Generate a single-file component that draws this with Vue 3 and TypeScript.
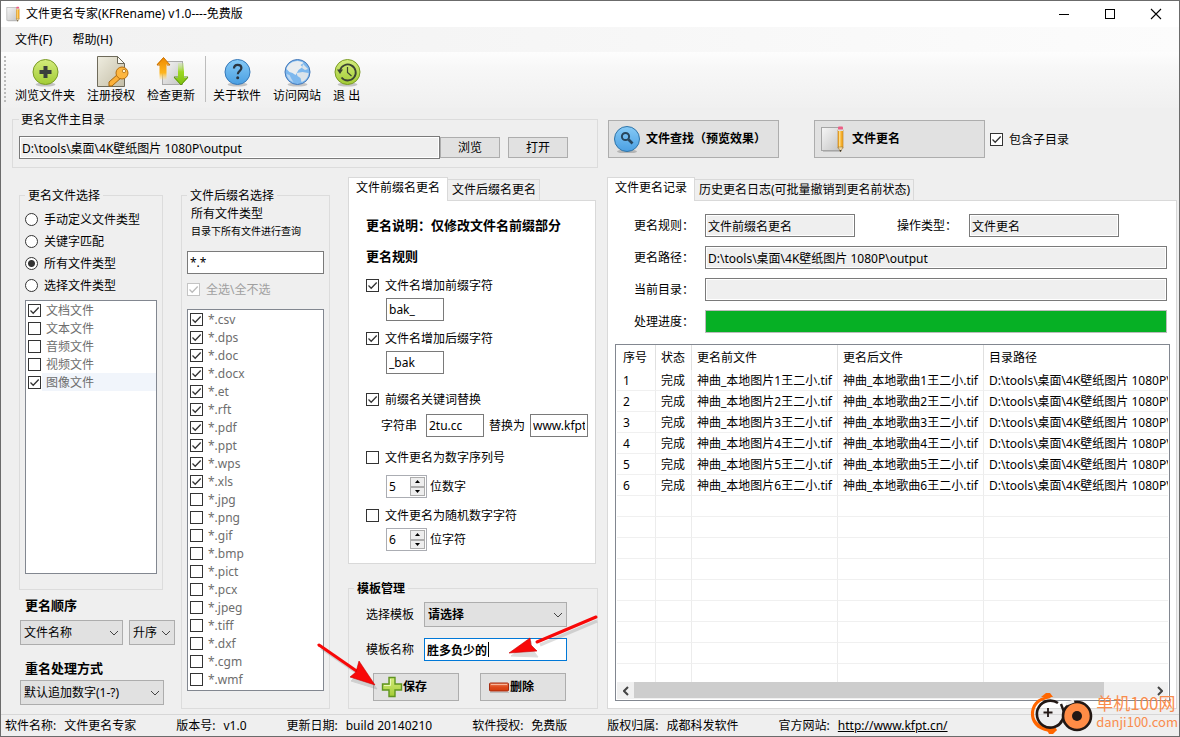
<script setup lang="ts">
import { ref } from 'vue'

interface CheckItem {
  label: string
  checked: boolean
}

const dir = 'D:\\tools\\桌面\\4K壁纸图片 1080P\\output'

const tools: { icon: string; label: string }[] = [
  { icon: 'plus', label: '浏览文件夹' },
  { icon: 'key', label: '注册授权' },
  { icon: 'update', label: '检查更新' },
  { icon: 'help', label: '关于软件' },
  { icon: 'globe', label: '访问网站' },
  { icon: 'exit', label: '退 出' },
]

const modes = ['手动定义文件类型', '关键字匹配', '所有文件类型', '选择文件类型']
const mode = ref('所有文件类型')

const kinds = ref<CheckItem[]>([
  { label: '文档文件', checked: true },
  { label: '文本文件', checked: false },
  { label: '音频文件', checked: false },
  { label: '视频文件', checked: false },
  { label: '图像文件', checked: true },
])

const extNames = 'csv dps doc docx et rft pdf ppt wps xls jpg png gif bmp pict pcx jpeg tiff dxf cgm wmf'.split(' ')
const exts = ref<CheckItem[]>(extNames.map((e, i) => ({ label: '*.' + e, checked: i < 10 })))

const mask = ref('*.*')
const path = ref(dir)
const prefixOn = ref(true)
const suffixOn = ref(true)
const replaceOn = ref(true)
const serialOn = ref(false)
const randomOn = ref(false)
const prefix = ref('bak_')
const suffix = ref('_bak')
const findText = ref('2tu.cc')
const replaceText = ref('www.kfpt.cn')
const serialLen = ref(5)
const randomLen = ref(6)
const templateName = ref('胜多负少的')
const subDirs = ref(true)

const rows = [1, 2, 3, 4, 5, 6].map((n) => ({
  n,
  state: '完成',
  before: `神曲_本地图片${n}王二小.tif`,
  after: `神曲_本地歌曲${n}王二小.tif`,
  path: dir,
}))

const status: { k: string; v: string; href?: string }[] = [
  { k: '软件名称:', v: '文件更名专家' },
  { k: '版本号:', v: 'v1.0' },
  { k: '更新日期:', v: 'build 20140210' },
  { k: '软件授权:', v: '免费版' },
  { k: '版权归属:', v: '成都科发软件' },
  { k: '官方网站:', v: 'http://www.kfpt.cn/', href: 'http://www.kfpt.cn/' },
]
</script>

<template>
  <div class="window">
    <svg class="defs" width="0" height="0" aria-hidden="true">
      <defs>
        <linearGradient id="gGreen" x1="0" y1="0" x2="0" y2="1">
          <stop offset="0" stop-color="#d3ec7c" /><stop offset="1" stop-color="#a3cc35" />
        </linearGradient>
        <linearGradient id="gBlue" x1="0" y1="0" x2="0" y2="1">
          <stop offset="0" stop-color="#86caf6" /><stop offset="1" stop-color="#4a9fe2" />
        </linearGradient>
        <linearGradient id="gPaper" x1="0" y1="0" x2="1" y2="1">
          <stop offset="0" stop-color="#efede0" /><stop offset="1" stop-color="#c3bda6" />
        </linearGradient>
        <linearGradient id="gGrey" x1="0" y1="0" x2="1" y2="1">
          <stop offset="0" stop-color="#f6f6f6" /><stop offset="1" stop-color="#c4c4c4" />
        </linearGradient>
        <linearGradient id="gUp" x1="0" y1="0" x2="0" y2="1">
          <stop offset="0" stop-color="#ef8a00" /><stop offset="0.7" stop-color="#fdb51e" /><stop offset="1" stop-color="#fdd56a" stop-opacity="0.2" />
        </linearGradient>
        <linearGradient id="gDown" x1="0" y1="0" x2="0" y2="1">
          <stop offset="0" stop-color="#c6e88a" stop-opacity="0.3" /><stop offset="0.4" stop-color="#9bd820" /><stop offset="1" stop-color="#7fbf10" />
        </linearGradient>
        <linearGradient id="gMinus" x1="0" y1="0" x2="0" y2="1">
          <stop offset="0" stop-color="#f08a62" /><stop offset="0.5" stop-color="#dd4a1c" /><stop offset="1" stop-color="#d43b0c" />
        </linearGradient>
        <symbol id="notepad" viewBox="0 0 28 28">
          <rect x="3" y="25" width="18" height="2" fill="#000" opacity="0.15" />
          <rect x="1.500" y="2.500" width="19" height="23" fill="url(#gGrey)" stroke="#a5a5a5" />
          <rect x="18" y="5" width="5" height="18" fill="#f5ae2b" stroke="#b97613" stroke-width="0.6" />
          <rect x="19" y="5" width="1.500" height="18" fill="#ffdb83" />
          <rect x="18" y="1.500" width="5" height="3.500" rx="1" fill="#ec5f86" />
          <rect x="18" y="4.500" width="5" height="1.500" fill="#ddd" />
          <path d="M18 22h5l-2.500 5z" fill="#f1dba8" stroke="#8c6a2a" stroke-width="0.5" />
          <path d="M19.500 25h2l-1 2z" fill="#333" />
        </symbol>
      </defs>
    </svg>

    <header class="titlebar">
      <svg class="app-icon" width="16" height="16"><use href="#notepad" /></svg>
      <h1>文件更名专家(KFRename) v1.0----免费版</h1>
      <button type="button" class="win" aria-label="最小化">
        <svg width="12" height="12"><path d="M1 6.500h10" stroke="#000" /></svg>
      </button>
      <button type="button" class="win" aria-label="最大化">
        <svg width="12" height="12"><rect x="1.500" y="1.500" width="9" height="9" fill="none" stroke="#000" /></svg>
      </button>
      <button type="button" class="win" aria-label="关闭">
        <svg width="12" height="12"><path d="M1 1l10 10M11 1L1 11" stroke="#000" stroke-width="1.100" /></svg>
      </button>
    </header>

    <nav class="menu">
      <button type="button">文件(F)</button>
      <button type="button">帮助(H)</button>
    </nav>

    <div class="toolbar">
      <span class="grip"></span>
      <template v-for="t in tools" :key="t.icon">
        <span v-if="t.icon === 'help'" class="tsep"></span>
        <button type="button" class="tool">
          <svg width="36" height="32" viewBox="0 0 36 32">
            <g v-if="t.icon === 'plus'">
              <ellipse cx="18.500" cy="28.500" rx="10" ry="2" fill="#000" opacity="0.2" />
              <circle cx="18.500" cy="16" r="12.500" fill="url(#gGreen)" stroke="#7a9a25" />
              <path d="M16.500 10h4v4h4v4h-4v4h-4v-4h-4v-4h4z" fill="#3a3f3c" />
            </g>
            <g v-else-if="t.icon === 'key'">
              <path d="M4.500 .5h20l7 7v23h-27z" fill="url(#gPaper)" stroke="#6e6a5a" />
              <path d="M24.500 .5l7 7h-7z" fill="#fbfaf4" stroke="#6e6a5a" />
              <path d="M25 18l4 3-10 9h-3v-4z" fill="#fbb03a" stroke="#a7660b" />
              <circle cx="29" cy="17" r="6" fill="#fdb640" stroke="#b56f10" />
              <circle cx="31" cy="15" r="1.700" fill="#fff3d0" stroke="#a7660b" stroke-width="0.7" />
            </g>
            <g v-else-if="t.icon === 'update'">
              <rect x="9.500" y="5.500" width="20" height="23" fill="url(#gGrey)" stroke="#aaa" />
              <path d="M10.500 1.500l6 7h-3v15h-7v-15h-3z" fill="url(#gUp)" />
              <path d="M7 9H4l6.500-7.500L17 9h-3" fill="none" stroke="#c96f00" />
              <path d="M25 7h6v15h4l-7 7-7-7h4z" fill="url(#gDown)" />
              <path d="M25 21h-4l7 8 7-8h-4" fill="none" stroke="#5d9410" />
            </g>
            <g v-else-if="t.icon === 'help'">
              <ellipse cx="18.500" cy="28.500" rx="10" ry="2" fill="#000" opacity="0.2" />
              <circle cx="18.500" cy="16" r="12.500" fill="url(#gBlue)" stroke="#3477b8" />
              <path d="M15 12.500c0-2.500 1.500-3.700 3.700-3.700s3.700 1.200 3.700 3.300c0 2.700-3.600 2.900-3.600 6.200" fill="none" stroke="#2b3540" stroke-width="2.200" />
              <circle cx="18.700" cy="21.800" r="1.500" fill="#2b3540" />
            </g>
            <g v-else-if="t.icon === 'globe'">
              <ellipse cx="18.500" cy="28.500" rx="10" ry="2" fill="#000" opacity="0.2" />
              <circle cx="18.500" cy="16" r="12.500" fill="#7db8ee" stroke="#4377b8" />
              <path d="M7.500 13c1-4 5-8 11-8 3 0 5 1 6 2l-3 2 2 2-4 3-3 5-3-2-3-1z" fill="#e9edf0" />
              <path d="M17.500 17l6-1 6 1c0 4-3 8-7 9l-1-4-3-2zM24 8l5 5-3 1-3-2z" fill="#dce4ea" />
              <path d="M7.500 18l3 1 2 4 2 3c-4-1-6-4-7-8z" fill="#b9d6f2" />
            </g>
            <g v-else>
              <ellipse cx="18.500" cy="28.500" rx="10" ry="2" fill="#000" opacity="0.2" />
              <circle cx="18.500" cy="16" r="12.500" fill="url(#gGreen)" stroke="#7a9a25" />
              <path d="M11 14.500a8 8 0 1 1 1.500 7" fill="none" stroke="#3c4434" stroke-width="1.800" />
              <path d="M8 13.500h6l-3 4.500z" fill="#3c4434" />
              <path d="M18.500 11v5.500l4 3.500" fill="none" stroke="#3c4434" stroke-width="1.200" />
            </g>
          </svg>
          <span>{{ t.label }}</span>
        </button>
      </template>
    </div>

    <main class="main">
      <section class="left">
        <fieldset class="dir">
          <legend>更名文件主目录</legend>
          <div class="dir-row">
            <input v-model="path" class="txt ro" type="text" aria-label="更名文件主目录" readonly />
            <button type="button" class="btn">浏览</button>
            <button type="button" class="btn open">打开</button>
          </div>
        </fieldset>

        <div class="cols">
          <div class="col-a">
            <fieldset class="pick">
              <legend>更名文件选择</legend>
              <label v-for="m in modes" :key="m" class="radio">
                <input v-model="mode" type="radio" name="mode" :value="m" /><span>{{ m }}</span>
              </label>
              <div class="list kinds">
                <label v-for="k in kinds" :key="k.label" class="item">
                  <input v-model="k.checked" type="checkbox" /><span>{{ k.label }}</span>
                </label>
              </div>
            </fieldset>
            <label class="head" for="order">更名顺序</label>
            <div class="sel-row">
              <span class="sel by">
                <select id="order"><option>文件名称</option></select>
                <svg width="10" height="6"><path d="M1 1l4 4 4-4" fill="none" stroke="#444" /></svg>
              </span>
              <span class="sel asc">
                <select aria-label="升序或降序"><option>升序</option><option>降序</option></select>
                <svg width="10" height="6"><path d="M1 1l4 4 4-4" fill="none" stroke="#444" /></svg>
              </span>
            </div>
            <label class="head dup" for="dup">重名处理方式</label>
            <span class="sel dupsel">
              <select id="dup"><option>默认追加数字(1-?)</option></select>
              <svg width="10" height="6"><path d="M1 1l4 4 4-4" fill="none" stroke="#444" /></svg>
            </span>
          </div>

          <fieldset class="col-b">
            <legend>文件后缀名选择</legend>
            <p class="kind">所有文件类型</p>
            <p class="hint">目录下所有文件进行查询</p>
            <input v-model="mask" class="txt" type="text" aria-label="文件后缀名" />
            <label class="all"><input type="checkbox" checked disabled /><span>全选\全不选</span></label>
            <div class="list exts">
              <label v-for="e in exts" :key="e.label" class="item">
                <input v-model="e.checked" type="checkbox" /><span>{{ e.label }}</span>
              </label>
            </div>
          </fieldset>

          <div class="col-c">
            <div class="tabs" role="tablist">
              <button type="button" role="tab" class="tab on" aria-selected="true">文件前缀名更名</button>
              <button type="button" role="tab" class="tab" aria-selected="false">文件后缀名更名</button>
            </div>
            <div class="rules">
              <p class="strong">更名说明：仅修改文件名前缀部分</p>
              <p class="strong second">更名规则</p>
              <label class="check"><input v-model="prefixOn" type="checkbox" /><span>文件名增加前缀字符</span></label>
              <input v-model="prefix" class="txt small" type="text" aria-label="前缀字符" />
              <label class="check"><input v-model="suffixOn" type="checkbox" /><span>文件名增加后缀字符</span></label>
              <input v-model="suffix" class="txt small" type="text" aria-label="后缀字符" />
              <label class="check r3"><input v-model="replaceOn" type="checkbox" /><span>前缀名关键词替换</span></label>
              <div class="replace">
                <label for="find">字符串</label>
                <input id="find" v-model="findText" class="txt" type="text" />
                <label for="repl">替换为</label>
                <input id="repl" v-model="replaceText" class="txt" type="text" />
              </div>
              <label class="check"><input v-model="serialOn" type="checkbox" /><span>文件更名为数字序列号</span></label>
              <div class="spin-row wide">
                <span class="spin">
                  <input id="serial" v-model="serialLen" type="number" />
                  <span class="arrows">
                    <button type="button" aria-label="增加" @click="serialLen++"><svg width="5" height="3"><path d="M0 3L2.500 0 5 3z" /></svg></button>
                    <button type="button" aria-label="减少" @click="serialLen--"><svg width="5" height="3"><path d="M0 0l2.500 3L5 0z" /></svg></button>
                  </span>
                </span>
                <label for="serial">位数字</label>
              </div>
              <label class="check"><input v-model="randomOn" type="checkbox" /><span>文件更名为随机数字字符</span></label>
              <div class="spin-row">
                <span class="spin">
                  <input id="random" v-model="randomLen" type="number" />
                  <span class="arrows">
                    <button type="button" aria-label="增加" @click="randomLen++"><svg width="5" height="3"><path d="M0 3L2.500 0 5 3z" /></svg></button>
                    <button type="button" aria-label="减少" @click="randomLen--"><svg width="5" height="3"><path d="M0 0l2.500 3L5 0z" /></svg></button>
                  </span>
                </span>
                <label for="random">位字符</label>
              </div>
            </div>

            <fieldset class="tpl">
              <legend>模板管理</legend>
              <div class="tpl-row">
                <label for="tpl">选择模板</label>
                <span class="sel bold">
                  <select id="tpl"><option>请选择</option></select>
                  <svg width="10" height="6"><path d="M1 1l4 4 4-4" fill="none" stroke="#444" /></svg>
                </span>
              </div>
              <div class="tpl-row name">
                <label for="tname">模板名称</label>
                <span class="focus">
                  <input id="tname" v-model="templateName" class="txt" type="text" />
                  <i class="caret"></i>
                </span>
              </div>
              <div class="tpl-btns">
                <button type="button" class="btn">
                  <svg width="22" height="22" viewBox="0 0 22 22">
                    <path d="M8 1.500h6v6.500h6.500v6h-6.500v6.500h-6v-6.500h-6.500v-6h6.500z" fill="url(#gGreen)" stroke="#5f9420" stroke-width="1.400" />
                    <path d="M9.500 3v6.500H3" fill="none" stroke="#ecf8b8" />
                  </svg>保存
                </button>
                <button type="button" class="btn">
                  <svg width="22" height="22" viewBox="0 0 22 22">
                    <rect x="1.500" y="7" width="19" height="8" rx="1" fill="url(#gMinus)" stroke="#a52c12" />
                    <path d="M3 8.500h16" stroke="#f7b59a" />
                    <path d="M2 16.500h19" stroke="#000" opacity="0.15" />
                  </svg>删除
                </button>
              </div>
              <svg class="pointers" width="300" height="90" viewBox="0 0 300 90" aria-hidden="true">
                <g transform="translate(2 3)" fill="#555" stroke="#555" opacity="0.2">
                  <path d="M11 35L46 59" stroke-width="3" />
                  <path d="M67 76l-26-8 6-6 3-9z" />
                  <path d="M287 8L230 32" stroke-width="3" />
                  <path d="M201 43l20-15 1 8 6 8z" />
                </g>
                <g fill="#f80808" stroke="#c80000">
                  <path d="M11 35L50 62" stroke="#f80808" stroke-width="3" stroke-linecap="round" />
                  <path d="M67 75l-25-8 6-5 3-11z" stroke-width="0.600" />
                  <path d="M288 7L229 32" stroke="#f80808" stroke-width="3" stroke-linecap="round" />
                  <path d="M201 43l21-15 1 7 6 6z" stroke-width="0.600" />
                </g>
              </svg>
            </fieldset>
          </div>
        </div>
      </section>

      <section class="right">
        <div class="actions">
          <button type="button" class="btn big">
            <svg width="28" height="28" viewBox="0 0 28 28">
              <ellipse cx="13" cy="26.500" rx="10" ry="2" fill="#000" opacity="0.2" />
              <circle cx="13" cy="14" r="12.500" fill="url(#gBlue)" stroke="#2f74a8" />
              <circle cx="11.500" cy="11.500" r="3.600" fill="none" stroke="#27455c" stroke-width="2" />
              <path d="M14.500 14.500l4 4" stroke="#27455c" stroke-width="2.600" />
            </svg>文件查找（预览效果）
          </button>
          <button type="button" class="btn big">
            <svg width="28" height="28"><use href="#notepad" /></svg>文件更名
          </button>
          <label class="check"><input v-model="subDirs" type="checkbox" /><span>包含子目录</span></label>
        </div>

        <div class="tabs" role="tablist">
          <button type="button" role="tab" class="tab on" aria-selected="true">文件更名记录</button>
          <button type="button" role="tab" class="tab" aria-selected="false">历史更名日志(可批量撤销到更名前状态)</button>
        </div>
        <div class="log">
          <div class="fields">
            <div class="frow">
              <label for="rule">更名规则：</label>
              <input id="rule" class="txt ro short" type="text" value="文件前缀名更名" readonly />
              <label for="op" class="op">操作类型：</label>
              <input id="op" class="txt ro short" type="text" value="文件更名" readonly />
            </div>
            <div class="frow">
              <label for="rpath">更名路径：</label>
              <input id="rpath" class="txt ro" type="text" :value="dir" readonly />
            </div>
            <div class="frow">
              <label for="cur">当前目录：</label>
              <input id="cur" class="txt ro" type="text" value="" readonly />
            </div>
            <div class="frow">
              <label for="prog">处理进度：</label>
              <progress id="prog" value="100" max="100"></progress>
            </div>
          </div>

          <div class="grid">
            <div class="grid-body">
              <table>
                <colgroup><col class="c1" /><col class="c2" /><col class="c3" /><col class="c3" /><col /></colgroup>
                <thead>
                  <tr><th>序号</th><th>状态</th><th>更名前文件</th><th>更名后文件</th><th>目录路径</th></tr>
                </thead>
                <tbody>
                  <tr v-for="r in rows" :key="r.n">
                    <td>{{ r.n }}</td><td>{{ r.state }}</td><td>{{ r.before }}</td><td>{{ r.after }}</td><td>{{ r.path }}</td>
                  </tr>
                  <tr v-for="i in 9" :key="'e' + i"><td></td><td></td><td></td><td></td><td></td></tr>
                </tbody>
              </table>
            </div>
            <div class="hscroll">
              <button type="button" aria-label="向左滚动"><svg width="6" height="10"><path d="M5 1L1 5l4 4" fill="none" stroke="#444" stroke-width="2" /></svg></button>
              <div class="track"><div class="thumb"></div></div>
              <button type="button" aria-label="向右滚动"><svg width="6" height="10"><path d="M1 1l4 4-4 4" fill="none" stroke="#444" stroke-width="2" /></svg></button>
            </div>
          </div>
        </div>
      </section>
    </main>

    <footer class="status">
      <span v-for="s in status" :key="s.k" class="cell">
        <span>{{ s.k }}</span>
        <a v-if="s.href" :href="s.href">{{ s.v }}</a>
        <span v-else>{{ s.v }}</span>
      </span>
    </footer>

    <div class="mark">
      <svg width="66" height="44" viewBox="0 0 66 44">
        <path d="M19 4C7 5 0 13 1 24c1 9 9 16 22 16l4-2-2-3C13 36 4 31 4 22 4 14 9 8 21 6z" fill="#f60" />
        <path d="M11 5l5-4h4l3 4zM17 38l2 4h4l4-4z" fill="#f60" />
        <path d="M28 11a13.500 13.500 0 1 0 4 18" fill="none" stroke="#221815" stroke-width="2.600" />
        <path d="M18 16v9M13.500 20.500h9" stroke="#221815" stroke-width="1.800" />
        <path d="M31 12l3 8c0 4-1 8-4 11" fill="none" stroke="#221815" stroke-width="2.400" />
        <circle cx="47" cy="24" r="14" fill="#ff8c46" stroke="#221815" stroke-width="2.600" />
        <path d="M36 12l8-3" stroke="#efefef" stroke-width="3" />
        <circle cx="47" cy="24" r="5" fill="#221815" />
      </svg>
      <div class="mark-text">
        <span class="mark-name">单机100网</span>
        <span class="mark-url">danji100.com</span>
      </div>
    </div>
  </div>
</template>

<style>
body {
  background: #f0f0f0;
}
</style>

<style scoped>
.window,
.window * {
  box-sizing: border-box;
}
.window {
  position: relative;
  display: flex;
  flex-direction: column;
  min-height: 100vh;
  border: 1px solid #6b6b6b;
  background: #efefef;
  color: #000;
  font-family: "Noto Sans", "Noto Sans CJK SC", sans-serif;
  font-size: 12px;
  line-height: 16px;
  white-space: nowrap;
}
.defs {
  position: absolute;
}
svg {
  display: block;
  flex: none;
}
button,
input,
select {
  font: inherit;
  color: inherit;
  margin: 0;
  padding: 0;
  border: 0;
  border-radius: 0;
  background: none;
}
p,
h1 {
  margin: 0;
}
fieldset {
  margin: 0;
  min-width: 0;
  border: 1px solid #dcdcdc;
}
legend {
  height: 16px;
  padding: 0 3px;
  line-height: 18px;
}

/* title, menu, toolbar */
.titlebar {
  display: flex;
  align-items: center;
  height: 26px;
  padding-left: 5px;
  background: #fff;
}
.titlebar h1 {
  flex: 1;
  margin-left: 4px;
  font-size: 12px;
  font-weight: 400;
}
.win {
  display: flex;
  align-items: center;
  justify-content: center;
  width: 46px;
  height: 26px;
}
.menu {
  display: flex;
  gap: 20px;
  height: 25px;
  padding-left: 14px;
  background: linear-gradient(90deg, #f1f1f1, #fcfcfc);
}
.toolbar {
  display: flex;
  align-items: flex-start;
  height: 56px;
  padding: 4px 0 0 3px;
  background: linear-gradient(#fdfdfd, #f7f7f7 30%, #f0f0f0);
}
.grip {
  width: 2px;
  height: 46px;
  margin-right: 3px;
  background: repeating-linear-gradient(#bbb 0 2px, transparent 2px 4px);
}
.tool {
  display: flex;
  flex-direction: column;
  align-items: center;
  padding: 0 6px;
  white-space: pre;
}
.tool svg {
  margin: 0 -6px;
}
.tsep {
  width: 1px;
  height: 46px;
  margin: 0 1px 0 4px;
  background: #bdbdbd;
}

/* shared controls */
.btn {
  display: flex;
  align-items: center;
  justify-content: center;
  border: 1px solid #adadad;
  background: #e1e1e1;
}
.txt {
  width: 100%;
  min-width: 0;
  height: 23px;
  padding: 0 2px;
  border: 1px solid #7a7a7a;
  background: #fff;
  outline: none;
}
.ro {
  background: #efefef;
  box-shadow: inset 0 0 0 1px #fff;
}
input[type='checkbox'],
input[type='radio'] {
  flex: none;
  appearance: none;
  width: 13px;
  height: 13px;
  border: 1px solid #333;
  background: #fff center / 11px 11px no-repeat;
}
input[type='checkbox']:checked {
  background-image: url("data:image/svg+xml,%3Csvg xmlns='http://www.w3.org/2000/svg' viewBox='0 0 11 11'%3E%3Cpath d='M1.500 5.500l2.700 2.700L9.700 2.500' fill='none' stroke='%23333' stroke-width='1.300'/%3E%3C/svg%3E");
}
input[type='checkbox']:disabled {
  border-color: #c4c4c4;
}
input[type='checkbox']:disabled:checked {
  background-image: url("data:image/svg+xml,%3Csvg xmlns='http://www.w3.org/2000/svg' viewBox='0 0 11 11'%3E%3Cpath d='M1.500 5.500l2.700 2.700L9.700 2.500' fill='none' stroke='%23bbb' stroke-width='1.300'/%3E%3C/svg%3E");
}
input[type='radio'] {
  border-radius: 50%;
}
input[type='radio']:checked {
  background-image: radial-gradient(circle, #333 0 3px, transparent 4px);
}
.check,
.radio,
.all {
  display: flex;
  align-items: center;
  gap: 6px;
  height: 16px;
}
.check span,
.radio span,
.all span {
  padding-top: 2px;
}
.list {
  border: 1px solid #828790;
  background: #fff;
  color: #6d6d6d;
}
.item {
  display: flex;
  align-items: center;
  height: 18px;
  padding-left: 2px;
}
.item span {
  flex: 1;
  margin-left: 1px;
  padding: 2px 0 0 4px;
  line-height: 16px;
}
.sel {
  position: relative;
  display: block;
}
.sel select {
  display: block;
  width: 100%;
  height: 25px;
  padding-left: 3px;
  appearance: none;
  border: 1px solid #adadad;
  background: #e1e1e1;
}
.sel svg {
  position: absolute;
  right: 4px;
  top: 10px;
  pointer-events: none;
}
.tabs {
  display: flex;
  align-items: flex-end;
  height: 24px;
  margin-bottom: -1px;
}
.tab {
  height: 21px;
  padding: 0 3px 0 4px;
  border: 1px solid #d9d9d9;
  border-left: 0;
  border-bottom: 0;
  margin-bottom: 1px;
}
.tab.on {
  position: relative;
  height: 24px;
  margin-bottom: 0;
  padding: 0 7px 3px;
  border-left: 1px solid #d9d9d9;
  background: #fff;
}

/* layout */
.main {
  flex: 1;
  display: grid;
  grid-template-columns: 586fr 570fr;
  gap: 9px;
  padding: 3px 2px 5px 11px;
}
.left,
.right {
  display: flex;
  flex-direction: column;
  min-width: 0;
}
.dir {
  padding: 9px 29px 8px 6px;
}
.dir legend {
  padding: 0 2px;
}
.dir-row {
  display: flex;
  align-items: center;
}
.dir-row .txt {
  flex: 1;
}
.dir-row .btn {
  width: 60px;
  height: 21px;
}
.dir-row .open {
  margin-left: 8px;
}
.cols {
  flex: 1;
  display: grid;
  grid-template-columns: 162fr 149fr 268fr;
  margin-top: 9px;
  padding-left: 7px;
}
.col-a {
  padding-top: 10px;
}
.pick {
  margin-right: 18px;
  padding: 5px 5px 15px;
}
.radio {
  height: 22px;
}
.kinds {
  height: 274px;
  margin-top: 4px;
}
.kinds .item:last-child span {
  background: #f1f5fb;
}
.head {
  display: block;
  margin: 6px 0 6px 6px;
  line-height: 18px;
  font-size: 13px;
  font-weight: 700;
}
.head.dup {
  margin: 14px 0 3px 6px;
}
.sel-row {
  display: flex;
  gap: 6px;
  padding: 0 6px 0 1px;
}
.by {
  flex: 103;
}
.asc {
  flex: 46;
}
.dupsel {
  margin: 0 17px 0 1px;
}
.col-b {
  margin-top: 10px;
  padding: 2px 5px 17px;
}
.kind,
.hint {
  padding-left: 4px;
}
.kind {
  line-height: 18px;
}
.hint {
  margin-bottom: 12px;
  font-size: 10px;
}
.all {
  margin: 7px 0 12px;
  color: #a0a0a0;
}
.exts {
  padding-bottom: 2px;
}
.col-c {
  padding-left: 18px;
}
.rules {
  margin-right: 2px;
  padding: 14px 7px 12px 17px;
  border: 1px solid #d9d9d9;
  background: #fff;
}
.strong {
  font-size: 13px;
  font-weight: 700;
  line-height: 20px;
}
.second {
  margin: 11px 0;
}
.rules .small {
  display: block;
  width: 58px;
  margin: 5px 0 9px 20px;
}
.r3 {
  margin-top: 17px;
}
.replace {
  display: grid;
  grid-template-columns: 45px 1fr 46px 1fr;
  align-items: center;
  margin: 7px 0 12px 15px;
}
.replace label + input + label {
  padding-left: 5px;
}
.spin-row {
  display: flex;
  align-items: center;
  gap: 3px;
  margin: 5px 0 0 20px;
}
.spin-row.wide {
  margin: 10px 0 9px 20px;
}
.spin {
  display: flex;
  width: 41px;
  height: 23px;
  padding: 1px;
  border: 1px solid #abadb3;
}
.spin input {
  flex: 1;
  min-width: 0;
  padding-left: 1px;
  appearance: textfield;
  outline: none;
}
.spin input::-webkit-inner-spin-button {
  appearance: none;
}
.arrows {
  display: grid;
  grid-template-rows: 1fr 1fr;
  width: 15px;
}
.arrows button {
  display: flex;
  align-items: center;
  justify-content: center;
  border: 1px solid #adadad;
  background: #eee;
}
.tpl {
  position: relative;
  margin-top: 16px;
  padding: 6px 30px 7px 5px;
}
.tpl legend,
.tpl .txt,
.tpl .btn,
.bold {
  font-weight: 700;
}
.tpl-row {
  display: grid;
  grid-template-columns: 58px 1fr;
  align-items: center;
  margin-left: 12px;
}
.tpl-row.name {
  margin-top: 11px;
}
.focus {
  position: relative;
  display: block;
}
.focus .txt {
  display: block;
  border-color: #0078d7;
}
.caret {
  position: absolute;
  left: 64px;
  top: 4px;
  width: 1px;
  height: 15px;
  background: #000;
}
.tpl-btns {
  display: grid;
  grid-template-columns: 1fr 1fr;
  gap: 21px;
  margin: 12px 1px 0 19px;
}
.tpl-btns .btn {
  height: 28px;
  justify-content: flex-start;
  padding-left: 7px;
}
.pointers {
  position: absolute;
  left: -41px;
  top: 14px;
  pointer-events: none;
}

/* right side */
.actions {
  display: flex;
  align-items: center;
  margin: 9px 0 19px 1px;
}
.big {
  width: 171px;
  height: 38px;
  margin-right: 35px;
  padding-left: 5px;
  justify-content: flex-start;
  gap: 4px;
  font-weight: 700;
}
.big + .big {
  margin-right: 5px;
}
.log {
  flex: 1;
  display: flex;
  flex-direction: column;
  min-width: 0;
  padding: 13px 6px 7px 7px;
  border: 1px solid #d9d9d9;
  background: #fff;
}
.fields {
  display: grid;
  gap: 9px;
  padding: 0 3px 0 19px;
}
.frow {
  display: flex;
  align-items: center;
}
.frow label {
  flex: none;
  width: 71px;
}
.frow .op {
  width: 72px;
  margin-left: 42px;
}
.frow .short {
  width: 150px;
}
progress {
  flex: 1;
  height: 23px;
  appearance: none;
  border: 1px solid #bcbcbc;
}
progress::-webkit-progress-bar {
  background: #e6e6e6;
}
progress::-webkit-progress-value {
  background: #06b025;
}
.grid {
  flex: 1;
  display: flex;
  flex-direction: column;
  margin-top: 11px;
  padding: 0 1px 1px;
  border: 1px solid #828790;
}
.grid-body {
  flex: 1 1 337px;
  height: 337px;
  overflow: hidden;
}
table {
  width: 100%;
  table-layout: fixed;
  border-collapse: separate;
  border-spacing: 0;
}
.c1 {
  width: 39px;
}
.c2 {
  width: 36px;
}
.c3 {
  width: 146px;
}
th,
td {
  height: 21px;
  padding: 2px 0 0 5px;
  overflow: hidden;
  border-right: 1px solid #ececec;
  border-bottom: 1px solid #f0f0f0;
  font-weight: 400;
  text-align: left;
}
th {
  height: 25px;
  padding-top: 0;
  border-right-color: #e0e0e0;
  border-bottom: 0;
}
th:first-child,
td:first-child {
  padding-left: 6px;
}
th:last-child,
td:last-child {
  border-right: 0;
}
.hscroll {
  display: flex;
  height: 17px;
  background: #f0f0f0;
}
.hscroll button {
  display: flex;
  align-items: center;
  justify-content: center;
  width: 17px;
}
.track {
  flex: 1;
}
.thumb {
  width: 91%;
  height: 16px;
  background: #cdcdcd;
}

/* status bar */
.status {
  display: flex;
  align-items: center;
  gap: 40px;
  height: 22px;
  padding-left: 4px;
  border-top: 1px solid #d7d7d7;
}
.cell {
  display: flex;
  gap: 8px;
}
.cell a {
  color: #000;
}
.mark {
  position: absolute;
  right: 1px;
  bottom: 0;
  display: flex;
  pointer-events: none;
  color: #f98c4d;
}
.mark-text {
  display: flex;
  flex-direction: column;
}
.mark-name {
  font-family: "Noto Sans CJK SC", sans-serif;
  font-size: 17px;
  line-height: 22px;
}
.mark-url {
  font-family: "Noto Sans CJK SC", sans-serif;
  font-size: 13px;
  line-height: 16px;
}
</style>
